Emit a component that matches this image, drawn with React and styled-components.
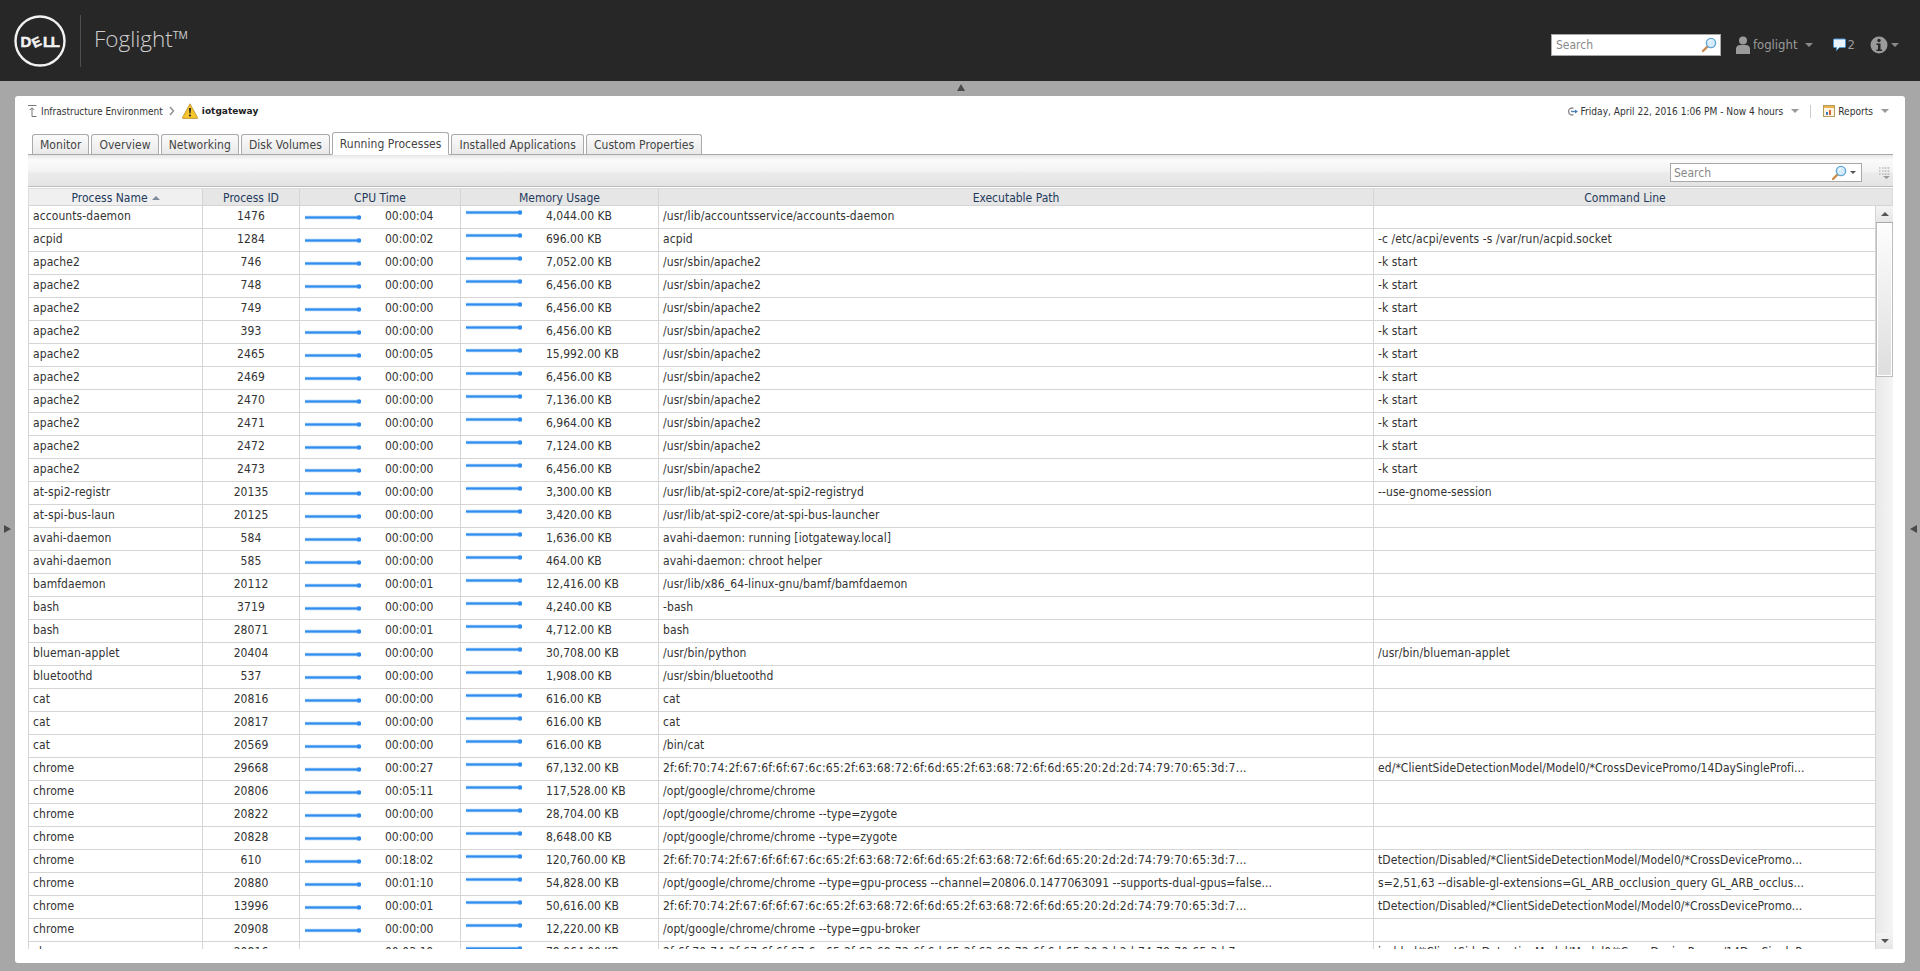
import React from "react";
import styled, { createGlobalStyle } from "styled-components";

const CH = "2f:6f:70:74:2f:67:6f:6f:67:6c:65:2f:63:68:72:6f:6d:65:2f:63:68:72:6f:6d:65:20:2d:2d:74:79:70:65:3d:7...";
const DET = "tDetection/Disabled/*ClientSideDetectionModel/Model0/*CrossDevicePromo...";

const rows = [
  ["accounts-daemon", "1476", "00:00:04", "4,044.00 KB", "/usr/lib/accountsservice/accounts-daemon", ""],
  ["acpid", "1284", "00:00:02", "696.00 KB", "acpid", "-c /etc/acpi/events -s /var/run/acpid.socket"],
  ["apache2", "746", "00:00:00", "7,052.00 KB", "/usr/sbin/apache2", "-k start"],
  ["apache2", "748", "00:00:00", "6,456.00 KB", "/usr/sbin/apache2", "-k start"],
  ["apache2", "749", "00:00:00", "6,456.00 KB", "/usr/sbin/apache2", "-k start"],
  ["apache2", "393", "00:00:00", "6,456.00 KB", "/usr/sbin/apache2", "-k start"],
  ["apache2", "2465", "00:00:05", "15,992.00 KB", "/usr/sbin/apache2", "-k start"],
  ["apache2", "2469", "00:00:00", "6,456.00 KB", "/usr/sbin/apache2", "-k start"],
  ["apache2", "2470", "00:00:00", "7,136.00 KB", "/usr/sbin/apache2", "-k start"],
  ["apache2", "2471", "00:00:00", "6,964.00 KB", "/usr/sbin/apache2", "-k start"],
  ["apache2", "2472", "00:00:00", "7,124.00 KB", "/usr/sbin/apache2", "-k start"],
  ["apache2", "2473", "00:00:00", "6,456.00 KB", "/usr/sbin/apache2", "-k start"],
  ["at-spi2-registr", "20135", "00:00:00", "3,300.00 KB", "/usr/lib/at-spi2-core/at-spi2-registryd", "--use-gnome-session"],
  ["at-spi-bus-laun", "20125", "00:00:00", "3,420.00 KB", "/usr/lib/at-spi2-core/at-spi-bus-launcher", ""],
  ["avahi-daemon", "584", "00:00:00", "1,636.00 KB", "avahi-daemon: running [iotgateway.local]", ""],
  ["avahi-daemon", "585", "00:00:00", "464.00 KB", "avahi-daemon: chroot helper", ""],
  ["bamfdaemon", "20112", "00:00:01", "12,416.00 KB", "/usr/lib/x86_64-linux-gnu/bamf/bamfdaemon", ""],
  ["bash", "3719", "00:00:00", "4,240.00 KB", "-bash", ""],
  ["bash", "28071", "00:00:01", "4,712.00 KB", "bash", ""],
  ["blueman-applet", "20404", "00:00:00", "30,708.00 KB", "/usr/bin/python", "/usr/bin/blueman-applet"],
  ["bluetoothd", "537", "00:00:00", "1,908.00 KB", "/usr/sbin/bluetoothd", ""],
  ["cat", "20816", "00:00:00", "616.00 KB", "cat", ""],
  ["cat", "20817", "00:00:00", "616.00 KB", "cat", ""],
  ["cat", "20569", "00:00:00", "616.00 KB", "/bin/cat", ""],
  ["chrome", "29668", "00:00:27", "67,132.00 KB", CH, "ed/*ClientSideDetectionModel/Model0/*CrossDevicePromo/14DaySingleProfi..."],
  ["chrome", "20806", "00:05:11", "117,528.00 KB", "/opt/google/chrome/chrome", ""],
  ["chrome", "20822", "00:00:00", "28,704.00 KB", "/opt/google/chrome/chrome --type=zygote", ""],
  ["chrome", "20828", "00:00:00", "8,648.00 KB", "/opt/google/chrome/chrome --type=zygote", ""],
  ["chrome", "610", "00:18:02", "120,760.00 KB", CH, DET],
  ["chrome", "20880", "00:01:10", "54,828.00 KB", "/opt/google/chrome/chrome --type=gpu-process --channel=20806.0.1477063091 --supports-dual-gpus=false...", "s=2,51,63 --disable-gl-extensions=GL_ARB_occlusion_query GL_ARB_occlus..."],
  ["chrome", "13996", "00:00:01", "50,616.00 KB", CH, DET],
  ["chrome", "20908", "00:00:00", "12,220.00 KB", "/opt/google/chrome/chrome --type=gpu-broker", ""],
  ["chrome", "20816", "00:03:19", "78,964.00 KB", CH, "isabled/*ClientSideDetectionModel/Model0/*CrossDevicePromo/14DaySingleP..."],
];

const tabs = ["Monitor", "Overview", "Networking", "Disk Volumes", "Running Processes", "Installed Applications", "Custom Properties"];
const columns = ["Process Name", "Process ID", "CPU Time", "Memory Usage", "Executable Path", "Command Line"];

const GlobalStyle = createGlobalStyle`
  html, body { margin: 0; padding: 0; height: 100%; overflow: hidden; }
  body {
    font-family: "DejaVu Sans Condensed", "DejaVu Sans", "Liberation Sans", sans-serif;
    font-stretch: condensed;
    font-size: 12px;
    color: #333;
    background: #a7a7a7;
  }
  * { box-sizing: border-box; }
`;

const Page = styled.div`
  height: 971px;
  display: flex;
  flex-direction: column;
`;

/* -------------------- top bar -------------------- */

const TopBar = styled.header`
  height: 81px;
  flex: none;
  background: #272727;
  display: flex;
  align-items: center;
  padding: 8px 21px 0 14px;
`;

const LogoWrap = styled.svg`
  flex: none;
  margin-top: -8px;
`;

const LogoDivider = styled.div`
  width: 1px;
  height: 52px;
  margin: -8px 13px 0 14px;
  background: #4e4e4e;
`;

const Brand = styled.div`
  font-family: "Open Sans", sans-serif;
  font-stretch: normal;
  font-weight: 300;
  font-size: 22.5px;
  color: #cfcfcf;
  flex: 1;
  margin-top: -12px;
`;

const TopSearch = styled.div`
  width: 170px;
  height: 22px;
  background: #fff;
  border: 1px solid #a8a8a8;
  display: flex;
  align-items: center;
  justify-content: space-between;
  padding: 0 3px 0 4px;
  color: #8a8a8a;
  font-size: 12px;
  margin-right: 15px;
`;

const UserName = styled.span`
  color: #9a9a9a;
  font-size: 13px;
  margin: 0 7px 0 3px;
`;

const Count = styled.span`
  color: #9a9a9a;
  font-size: 13px;
  margin: 0 15px 0 2px;
`;

const Caret = styled.span`
  display: inline-block;
  width: 0;
  height: 0;
  border-left: ${(p) => p.$size || 4}px solid transparent;
  border-right: ${(p) => p.$size || 4}px solid transparent;
  border-top: ${(p) => p.$size || 4}px solid ${(p) => p.$color || "#8a8a8a"};
  margin: ${(p) => p.$margin || "0"};
`;

/* -------------------- work area -------------------- */

const Workspace = styled.main`
  position: relative;
  flex: 1;
  min-height: 0;
  padding: 15px 15px 8px;
  display: flex;
`;

const Nudge = styled.span`
  position: absolute;
  width: 0;
  height: 0;
  ${(p) => p.$dir === "up" && `
    top: 3px; left: 957px;
    border-left: 4px solid transparent;
    border-right: 4px solid transparent;
    border-bottom: 7px solid #4a4a4a;
  `}
  ${(p) => p.$dir === "left" && `
    top: 444px; left: 4px;
    border-top: 4px solid transparent;
    border-bottom: 4px solid transparent;
    border-left: 7px solid #4a4a4a;
  `}
  ${(p) => p.$dir === "right" && `
    top: 444px; right: 3px;
    border-top: 4px solid transparent;
    border-bottom: 4px solid transparent;
    border-right: 7px solid #4a4a4a;
  `}
`;

const Panel = styled.section`
  flex: 1;
  min-width: 0;
  background: #fff;
  border-radius: 3px;
  padding: 0 12px 14px 13px;
  display: flex;
  flex-direction: column;
`;

const CrumbBar = styled.div`
  height: 36px;
  flex: none;
  display: flex;
  align-items: center;
  padding-bottom: 6px;
  font-size: 11px;
  color: #333;
`;

const Crumb = styled.span`
  margin-left: 4px;
  font-size: 10px;
`;

const CrumbCurrent = styled.strong`
  margin-left: 4px;
  font-size: 9px;
  font-stretch: normal;
  font-family: "DejaVu Sans", sans-serif;
  color: #222;
  flex: 1;
`;

const RangeText = styled.span`
  margin-left: 3px;
  font-size: 10.1px;
`;

const BarDivider = styled.span`
  width: 1px;
  height: 13px;
  background: #ccc;
  margin: 0 12px 0 11px;
`;

const TabStrip = styled.nav`
  height: 23px;
  flex: none;
  display: flex;
  align-items: flex-end;
  gap: 2px;
  padding-left: 4px;
  border-bottom: 1px solid #a9a9a9;
`;

const Tab = styled.div`
  height: ${(p) => (p.$active ? 23 : 20)}px;
  margin-bottom: ${(p) => (p.$active ? -1 : 0)}px;
  padding: 0 7px;
  display: flex;
  align-items: center;
  border: 1px solid #aaa;
  border-bottom: ${(p) => (p.$active ? "1px solid #fff" : "0")};
  border-radius: 3px 3px 0 0;
  background: ${(p) => (p.$active ? "#fff" : "linear-gradient(#fbfbfb, #e9e9e9)")};
  color: #444;
  font-size: 12px;
  letter-spacing: 0.05px;
`;

const Toolbar = styled.div`
  height: 32px;
  flex: none;
  display: flex;
  align-items: center;
  justify-content: flex-end;
  padding: 4px 3px 0 0;
  border-bottom: 1px solid #bbb;
  background: linear-gradient(#e6e6e6 0, #fbfbfb 5px, #f2f2f2 17px, #ebebeb 18px, #e4e4e4 100%);
`;

const TableSearch = styled.div`
  width: 192px;
  height: 19px;
  margin-right: 17px;
  background: #fff;
  border: 1px solid #a8a8a8;
  display: flex;
  align-items: center;
  padding: 0 5px 0 3px;
  color: #888;
  font-size: 12px;
`;

const SearchLabel = styled.span`
  flex: 1;
`;

const Table = styled.div`
  flex: 1;
  min-height: 0;
  margin-top: 1px;
  display: flex;
  flex-direction: column;
`;

const gridCols = "174px 97px 161px 198px 715px 1fr";

const HeadRow = styled.div`
  height: 18px;
  flex: none;
  display: grid;
  grid-template-columns: ${gridCols};
  border: 1px solid #dcdcdc;
  border-bottom: 1px solid #d5d5d5;
  background: #e6e6e6;
`;

const HeadCell = styled.div`
  display: flex;
  align-items: center;
  justify-content: center;
  padding: 1px ${(p) => (p.$last ? 16 : 0)}px 0 0;
  color: #1f3a5c;
  font-size: 12px;
  background: ${(p) => (p.$sorted ? "#f0f0f0" : "transparent")};
  border-right: ${(p) => (p.$last ? "0" : "1px solid #d5d5d5")};
`;

const SortArrow = styled.span`
  width: 0;
  height: 0;
  margin-left: 4px;
  border-left: 4px solid transparent;
  border-right: 4px solid transparent;
  border-bottom: 4px solid #7d8a9a;
`;

const TableBody = styled.div`
  flex: 1;
  min-height: 0;
  display: flex;
`;

const RowList = styled.div`
  flex: 1;
  min-width: 0;
  overflow: hidden;
`;

const Row = styled.div`
  height: 23px;
  display: grid;
  grid-template-columns: ${gridCols};
  border-left: 1px solid #d5d5d5;
  border-bottom: 1px solid #d5d5d5;
`;

const Cell = styled.div`
  display: flex;
  align-items: center;
  justify-content: ${(p) => (p.$center ? "center" : "flex-start")};
  padding-left: ${(p) => (p.$center ? 0 : 4)}px;
  padding-bottom: 3px;
  border-right: 1px solid #d5d5d5;
  white-space: nowrap;
  overflow: hidden;
  color: #333;
  font-size: 12px;
  letter-spacing: ${(p) => (p.$hex ? 0.25 : 0.08)}px;
`;

const SparkCell = styled(Cell)`
  padding-left: 5px;
  padding-bottom: 0;
  letter-spacing: 0;
`;

const MetricValue = styled.span`
  margin-left: ${(p) => p.$gap}px;
  margin-top: -3px;
`;

const SparkSvg = styled.svg`
  flex: none;
  margin-top: ${(p) => (p.$lifted ? -9 : 1)}px;
`;

const ScrollBar = styled.div`
  width: 17px;
  flex: none;
  display: flex;
  flex-direction: column;
  background: linear-gradient(90deg, #e9e9e9, #f5f5f5);
`;

const ScrollButton = styled.div`
  height: 16px;
  flex: none;
  display: flex;
  align-items: center;
  justify-content: center;
  background: linear-gradient(#f4f4f4, #e6e6e6);
`;

const ScrollThumb = styled.div`
  height: 155px;
  flex: none;
  border: 1px solid #bcbcbc;
  border-top-color: #a9a9a9;
  box-shadow: inset 0 0 0 1px #fff;
  background: linear-gradient(#fdfdfd, #dedede);
`;

const ScrollTrack = styled.div`
  flex: 1;
`;

const TinyArrow = styled.span`
  width: 0;
  height: 0;
  border-left: 4px solid transparent;
  border-right: 4px solid transparent;
  ${(p) => (p.$down ? "border-top: 4px solid #555;" : "border-bottom: 4px solid #555;")}
`;

/* -------------------- drawings -------------------- */

const LogoLetter = styled.text`
  font-family: "Liberation Sans", sans-serif;
  font-weight: 700;
  font-size: ${(p) => p.$size || 15}px;
  fill: #f2f2f2;
  stroke: #f2f2f2;
  stroke-width: 0.5px;
`;

const DellLogo = () => (
  <LogoWrap width="52" height="52" viewBox="0 0 52 52">
    <circle cx="26" cy="26" r="24.5" fill="none" stroke="#f2f2f2" strokeWidth="2.4" />
    <LogoLetter x="6.500" y="31.500">D</LogoLetter>
    <LogoLetter $size={13} transform="translate(20.500 33) rotate(-25)">E</LogoLetter>
    <LogoLetter x="29" y="31.500" letterSpacing="-1.300">LL</LogoLetter>
  </LogoWrap>
);

const Magnifier = () => (
  <svg width="16" height="16" viewBox="0 0 16 16">
    <line x1="2" y1="14" x2="7" y2="9" stroke="#c98a4b" strokeWidth="2.400" strokeLinecap="round" />
    <circle cx="10" cy="6" r="4.600" fill="#d7ecfb" stroke="#5fa8d8" strokeWidth="1.400" />
    <path d="M7.600 5.400a3 3 0 0 1 2.600-2" fill="none" stroke="#fff" strokeWidth="1" />
  </svg>
);

const UserIcon = () => (
  <svg width="14" height="18" viewBox="0 0 14 18">
    <circle cx="7" cy="4.500" r="4" fill="#9a9a9a" />
    <path d="M0 18v-5c0-2.500 2-4 4-4h6c2 0 4 1.500 4 4v5z" fill="#9a9a9a" />
  </svg>
);

const ChatIcon = () => (
  <svg width="13" height="13" viewBox="0 0 13 13">
    <path d="M1.500 1h10a1 1 0 0 1 1 1v6.500a1 1 0 0 1-1 1H6.500L3.500 12.500V9.500h-2a1 1 0 0 1-1-1V2a1 1 0 0 1 1-1z" fill="#e8f3fc" stroke="#4a97d8" strokeWidth="1" />
  </svg>
);

const InfoIcon = () => (
  <svg width="18" height="18" viewBox="0 0 18 18">
    <circle cx="9" cy="9" r="8.500" fill="#9a9a9a" />
    <circle cx="9" cy="4.500" r="1.700" fill="#272727" />
    <path d="M6.500 7.500h4v6h1.500v1.500H6.500v-1.500H8v-4.500H6.500z" fill="#272727" />
  </svg>
);

const TreeUpIcon = () => (
  <svg width="9" height="12" viewBox="0 0 9 12">
    <path d="M0 .5h8.500M4 11.500h4.500M4 11.500V3M1.800 5 4 2.800 6.200 5" fill="none" stroke="#777" strokeWidth="1" />
  </svg>
);

const ChevronIcon = () => (
  <svg width="6" height="10" viewBox="0 0 6 10" style={{ marginLeft: 6 }}>
    <path d="M1 1l3.500 4L1 9" fill="none" stroke="#888" strokeWidth="1.300" />
  </svg>
);

const WarningIcon = () => (
  <svg width="16" height="16" viewBox="0 0 16 16" style={{ marginLeft: 7 }}>
    <path d="M8 .8 15.500 14.500a.6.600 0 0 1-.5.900H1a.6.600 0 0 1-.5-.900z" fill="#f7c62d" stroke="#b68a2a" strokeWidth=".8" />
    <path d="M7 5h2l-.4 5.500H7.400z" fill="#222" />
    <circle cx="8" cy="12.500" r="1.100" fill="#222" />
  </svg>
);

const RangeIcon = () => (
  <svg width="11" height="9" viewBox="0 0 11 9">
    <path d="M6.500 1.300A3.500 3.500 0 1 0 6.500 7.700" fill="none" stroke="#888" strokeWidth="1.300" />
    <path d="M4 4.500h5" stroke="#4a7fb5" strokeWidth="1.400" />
    <path d="M8 2.500l3 2-3 2z" fill="#4a7fb5" />
  </svg>
);

const ReportsIcon = () => (
  <svg width="12" height="12" viewBox="0 0 12 12">
    <rect x=".5" y=".5" width="11" height="11" fill="#fdf5e0" stroke="#b79a60" />
    <rect x="1" y="1" width="10" height="2" fill="#e9b44c" />
    <rect x="3" y="7" width="2" height="3" fill="#3d7cc0" />
    <rect x="6" y="5" width="2" height="5" fill="#d9683a" />
  </svg>
);

const ListMenuIcon = () => (
  <svg width="11" height="12" viewBox="0 0 11 12">
    <path d="M0 1h2M3 1h8M0 4h2M3 4h8M0 7h2M3 7h8" stroke="#a2a2a2" strokeWidth="1" strokeDasharray="1 .5" />
    <path d="M4 9h7l-3.500 3z" fill="#999" />
  </svg>
);

const Spark = ({ lifted }) => (
  <SparkSvg $lifted={lifted} width="56" height="5" viewBox="0 0 56 5">
    <line x1="0" y1="2.500" x2="54" y2="2.500" stroke="#a9d0f7" strokeWidth="3.500" />
    <line x1="0" y1="2.500" x2="54" y2="2.500" stroke="#2f8cee" strokeWidth="2" />
    <circle cx="54" cy="2.500" r="2.300" fill="#2f8cee" />
  </SparkSvg>
);

const App = () => (
  <Page>
    <GlobalStyle />
    <TopBar>
      <DellLogo />
      <LogoDivider />
      <Brand>Foglight™</Brand>
      <TopSearch>
        Search
        <Magnifier />
      </TopSearch>
      <UserIcon />
      <UserName>foglight</UserName>
      <Caret $margin="0 20px 0 0" />
      <ChatIcon />
      <Count>2</Count>
      <InfoIcon />
      <Caret $margin="0 0 0 3px" />
    </TopBar>

    <Workspace>
      <Nudge $dir="up" />
      <Nudge $dir="left" />
      <Nudge $dir="right" />
      <Panel>
        <CrumbBar>
          <TreeUpIcon />
          <Crumb>Infrastructure Environment</Crumb>
          <ChevronIcon />
          <WarningIcon />
          <CrumbCurrent>iotgateway</CrumbCurrent>
          <RangeIcon />
          <RangeText>Friday, April 22, 2016 1:06 PM - Now 4 hours</RangeText>
          <Caret $margin="0 0 0 8px" $color="#999" />
          <BarDivider />
          <ReportsIcon />
          <RangeText>Reports</RangeText>
          <Caret $margin="0 4px 0 8px" $color="#999" />
        </CrumbBar>

        <TabStrip>
          {tabs.map((t) => (
            <Tab key={t} $active={t === "Running Processes"}>{t}</Tab>
          ))}
        </TabStrip>

        <Toolbar>
          <TableSearch>
            <SearchLabel>Search</SearchLabel>
            <Magnifier />
            <Caret $size={3} $color="#555" $margin="0 0 0 3px" />
          </TableSearch>
          <ListMenuIcon />
        </Toolbar>

        <Table>
          <HeadRow>
            {columns.map((c, i) => (
              <HeadCell key={c} $sorted={i === 0} $last={i === columns.length - 1}>
                {c}
                {i === 0 && <SortArrow />}
              </HeadCell>
            ))}
          </HeadRow>
          <TableBody>
            <RowList>
              {rows.map((r, i) => (
                <Row key={i}>
                  <Cell>{r[0]}</Cell>
                  <Cell $center>{r[1]}</Cell>
                  <SparkCell>
                    <Spark />
                    <MetricValue $gap={24}>{r[2]}</MetricValue>
                  </SparkCell>
                  <SparkCell>
                    <Spark lifted />
                    <MetricValue $gap={24}>{r[3]}</MetricValue>
                  </SparkCell>
                  <Cell $hex={r[4] === CH}>{r[4]}</Cell>
                  <Cell>{r[5]}</Cell>
                </Row>
              ))}
            </RowList>
            <ScrollBar>
              <ScrollButton><TinyArrow /></ScrollButton>
              <ScrollThumb />
              <ScrollTrack />
              <ScrollButton><TinyArrow $down /></ScrollButton>
            </ScrollBar>
          </TableBody>
        </Table>
      </Panel>
    </Workspace>
  </Page>
);

export default App;
